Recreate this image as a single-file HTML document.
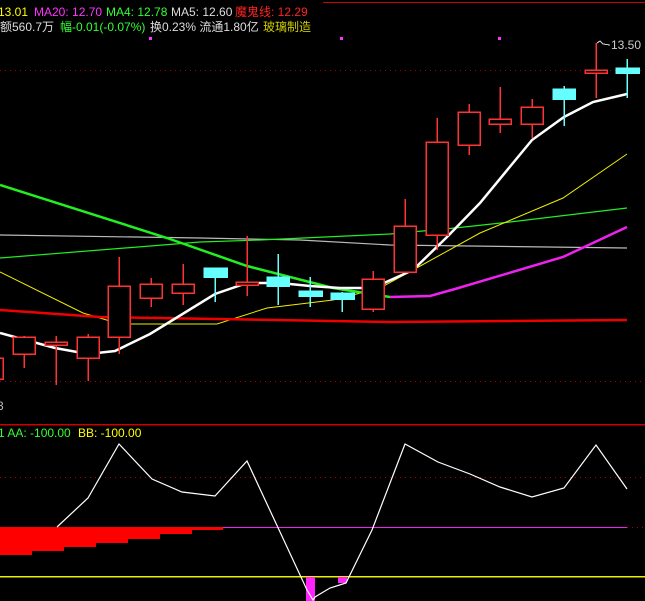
<!DOCTYPE html>
<html><head><meta charset="utf-8"><style>
html,body{margin:0;padding:0;background:#000;width:645px;height:601px;overflow:hidden}
svg{display:block}
text{font-family:"Liberation Sans","Noto Sans CJK SC",sans-serif;font-size:12px}
</style></head><body>
<svg width="645" height="601" xmlns="http://www.w3.org/2000/svg" shape-rendering="crispEdges">
<line x1="323" y1="2.5" x2="645" y2="2.5" stroke="#c00" stroke-width="1"/>
<text x="-2" y="16" fill="#ffff00">13.01</text>
<text x="34" y="16" fill="#ff33ff">MA20: 12.70</text>
<text x="106" y="16" fill="#33ff33">MA4: 12.78</text>
<text x="171" y="16" fill="#dddddd">MA5: 12.60</text>
<text x="235" y="16" fill="#ff2222">魔鬼线: 12.29</text>
<text x="0" y="31" fill="#dddddd">额560.7万</text>
<text x="60" y="31" fill="#33ff33">幅-0.01(-0.07%)</text>
<text x="150" y="31" fill="#dddddd">换0.23% 流通1.80亿</text>
<text x="263" y="31" fill="#cccc00">玻璃制造</text>
<rect x="149" y="37" width="3" height="3" fill="#ff33ff"/>
<rect x="340" y="37" width="3" height="3" fill="#ff33ff"/>
<rect x="498" y="37" width="3" height="3" fill="#ff33ff"/>
<text x="611" y="49" fill="#cccccc">13.50</text>
<path d="M597 43 L600 41 L603 44 L610 45" stroke="#ccc" fill="none"/>
<line x1="0" y1="70.5" x2="645" y2="70.5" stroke="#a00" stroke-dasharray="1,4"/>
<line x1="0" y1="381.5" x2="645" y2="381.5" stroke="#a00" stroke-dasharray="1,4"/>
<g fill="none" shape-rendering="auto">
<polyline points="0,235 200,238 300,240 390,245 627,248" stroke="#bbb" stroke-width="1.2"/>
<polyline points="0,258 200,242 260,240 390,234 455,228 510,222 560,216 627,208" stroke="#22ee22" stroke-width="1.2"/>
<polyline points="0,272 83,313 120,324 217,324 267,308 333,300 380,288 413,270 480,233 563,198 627,154" stroke="#eeee00" stroke-width="1"/>
<polyline points="0,310 100,317 217,319 390,322 627,320" stroke="#ee0000" stroke-width="2.5"/>
<polyline points="0,185 167,238 247,266 333,288 390,297" stroke="#22ee22" stroke-width="2.5"/>
<polyline points="390,297 430,296 455,289 563,257 627,227" stroke="#ee22ee" stroke-width="2.5"/>
<polyline points="0,333 55,348 88,354 115,351 150,334 215,294 247,283 280,283 310,286 340,288 373,288 413,270 447,237 480,203 532,140 564,117 593,102 627,94" stroke="#fff" stroke-width="2.5"/>
</g>
<g stroke="#ff3333" fill="none" stroke-width="1.5">
<rect x="-5" y="358" width="8" height="21"/>
<line x1="24" y1="336" x2="24" y2="368"/><rect x="13" y="337" width="22" height="17" fill="#000"/>
<line x1="56" y1="336" x2="56" y2="385"/><rect x="45" y="342" width="22" height="3" fill="#000"/>
<line x1="88" y1="334" x2="88" y2="381"/><rect x="77" y="337" width="22" height="21" fill="#000"/>
<line x1="119" y1="257" x2="119" y2="354"/><rect x="108" y="286" width="22" height="51" fill="#000"/>
<line x1="151" y1="278" x2="151" y2="307"/><rect x="140" y="284" width="22" height="14" fill="#000"/>
<line x1="183" y1="264" x2="183" y2="305"/><rect x="172" y="284" width="22" height="9" fill="#000"/>
<line x1="247" y1="236" x2="247" y2="296"/><rect x="236" y="282" width="22" height="3" fill="#000"/>
<line x1="373" y1="271" x2="373" y2="312"/><rect x="362" y="279" width="22" height="30" fill="#000"/>
<line x1="405" y1="199" x2="405" y2="272"/><rect x="394" y="226" width="22" height="46" fill="#000"/>
<line x1="437" y1="118" x2="437" y2="250"/><rect x="426" y="142" width="22" height="93" fill="#000"/>
<line x1="469" y1="104" x2="469" y2="155"/><rect x="458" y="112" width="22" height="33" fill="#000"/>
<line x1="500" y1="87" x2="500" y2="133"/><rect x="489" y="119" width="22" height="5" fill="#000"/>
<line x1="532" y1="99" x2="532" y2="138"/><rect x="521" y="107" width="22" height="17" fill="#000"/>
<line x1="596" y1="43" x2="596" y2="98"/><rect x="585" y="70" width="22" height="3" fill="#000"/>
</g>
<g stroke="#66ffff" fill="#66ffff" stroke-width="1.5">
<line x1="215" y1="268" x2="215" y2="302"/><rect x="204" y="268" width="23" height="9"/>
<line x1="278" y1="254" x2="278" y2="305"/><rect x="267" y="277" width="22" height="9"/>
<line x1="310" y1="277" x2="310" y2="307"/><rect x="299" y="291" width="23" height="5"/>
<line x1="342" y1="292" x2="342" y2="312"/><rect x="331" y="293" width="23" height="6"/>
<line x1="564" y1="86" x2="564" y2="126"/><rect x="553" y="89" width="22" height="10"/>
<line x1="627" y1="59" x2="627" y2="98"/><rect x="616" y="68" width="23" height="5"/>
</g>
<text x="-3" y="410" fill="#bbbbbb">3</text>
<line x1="0" y1="424.5" x2="645" y2="424.5" stroke="#c00" stroke-width="1.5"/>
<text x="-2" y="437" fill="#33ff33">1 AA: -100.00</text>
<text x="78" y="437" fill="#ffff00">BB: -100.00</text>
<line x1="0" y1="477.5" x2="645" y2="477.5" stroke="#a00" stroke-dasharray="1,4"/>
<line x1="223" y1="527.5" x2="627" y2="527.5" stroke="#ee22ee"/>
<line x1="627" y1="527.5" x2="645" y2="527.5" stroke="#a00" stroke-dasharray="1,4"/>
<g fill="#ff0000">
<rect x="0" y="527" width="32" height="28"/><rect x="32" y="527" width="32" height="24"/>
<rect x="64" y="527" width="32" height="20"/><rect x="96" y="527" width="32" height="16"/>
<rect x="128" y="527" width="32" height="12"/><rect x="160" y="527" width="32" height="7"/>
<rect x="192" y="527" width="31" height="3"/>
</g>
<line x1="0" y1="576.5" x2="645" y2="576.5" stroke="#eeee00" stroke-width="1.5"/>
<rect x="306" y="577" width="9" height="24" fill="#ff22ff"/>
<rect x="338" y="577" width="9" height="6" fill="#ff22ff"/>
<polyline shape-rendering="auto" fill="none" stroke="#fff" stroke-width="1.2" points="57,527 88,498 119,444 152,479 182,492 215,496 247,461 307,590 313,600 315,597 330,588 346,583 372,530 405,444 438,462 470,474 500,487 532,497 564,488 596,445 627,489"/>
</svg>
</body></html>
